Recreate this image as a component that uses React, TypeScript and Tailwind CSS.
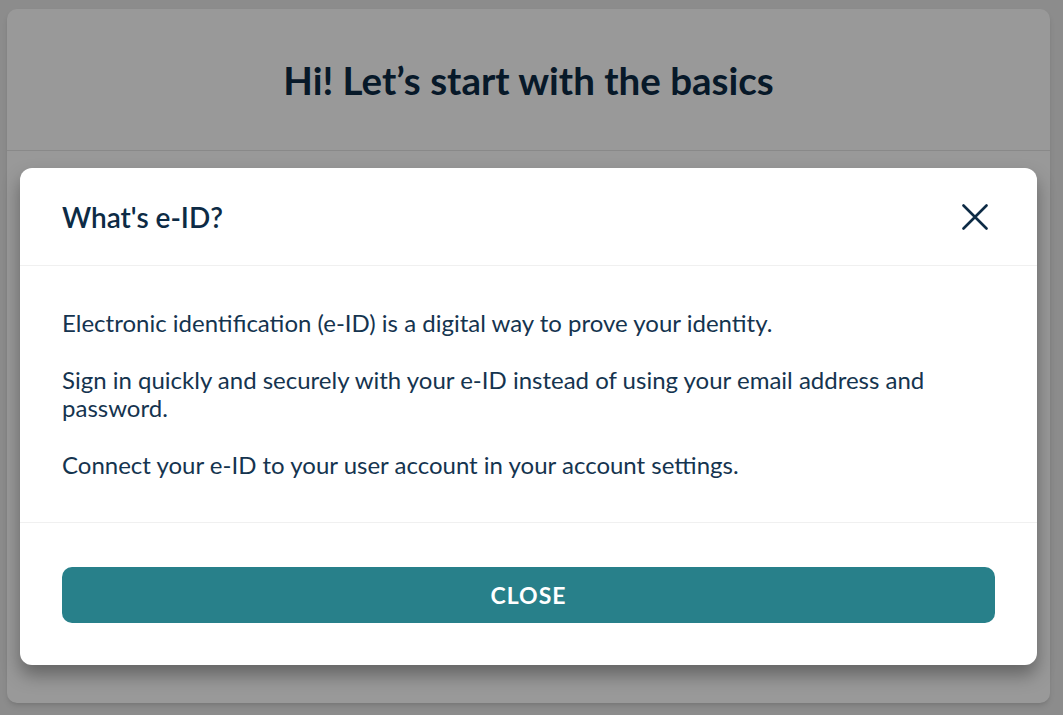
import React from "react";

const App = () => {
  return (
    <div className="relative w-full h-[715px] bg-[#e9e9e9] font-['Lato','Liberation_Sans',sans-serif] overflow-hidden">
      {/* Page underneath */}
      <div className="pt-[9px] pl-[7px] pr-[13px] h-full">
        <div className="h-[694px] bg-white rounded-[10px] shadow-md">
          <header className="h-[142px] flex items-center justify-center border-b border-[#e4e4e4]">
            <h1 className="text-[38.5px] font-bold text-[#0d2b45] pt-[2px]">Hi! Let’s start with the basics</h1>
          </header>
        </div>
      </div>

      {/* Overlay */}
      <div className="absolute inset-0 bg-black/40" />

      {/* Modal */}
      <div className="absolute left-[20px] top-[168px] w-[1017px] bg-white rounded-[12px] shadow-[0_10px_18px_rgba(0,0,0,0.35)] text-[#0d2b45]">
        <div className="h-[98px] flex items-center justify-between pl-[42px] pr-[48px] border-b border-[#f0f0f0]">
          <h2 className="text-[28px] font-semibold">What's e-ID?</h2>
          <button type="button" className="w-[28px] h-[28px] flex items-center justify-center">
            <svg width="26" height="26" viewBox="0 0 26 26" fill="none">
              <path d="M1.5 1.5 L24.5 24.5 M24.5 1.5 L1.5 24.5" stroke="#0d2b45" strokeWidth="2.6" strokeLinecap="round" />
            </svg>
          </button>
        </div>

        <div className="px-[42px] py-[43px] text-[24px] leading-[28px] text-[#15344f] space-y-[29px] border-b border-[#f0f0f0]">
          <p>Electronic identification (e-ID) is a digital way to prove your identity.</p>
          <p>Sign in quickly and securely with your e-ID instead of using your email address and password.</p>
          <p>Connect your e-ID to your user account in your account settings.</p>
        </div>

        <div className="px-[42px] pt-[44px] pb-[42px]">
          <button
            type="button"
            className="w-full h-[56px] rounded-[10px] bg-[#28808a] text-white text-[23px] font-bold tracking-[1px]"
          >
            CLOSE
          </button>
        </div>
      </div>
    </div>
  );
};

export default App;
